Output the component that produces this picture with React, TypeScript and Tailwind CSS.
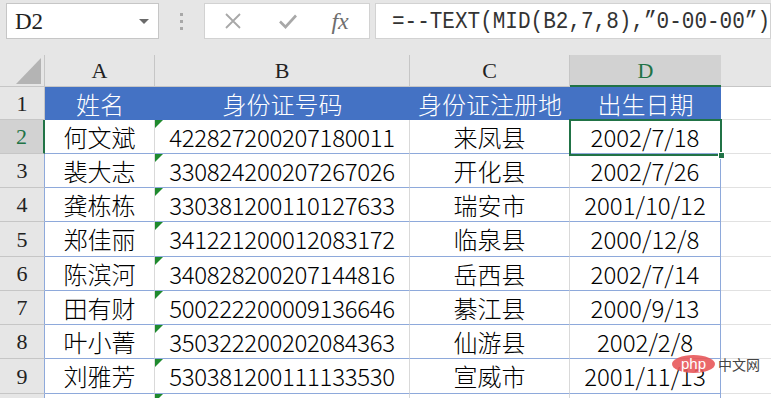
import React from "react";

const rows: [string, string, string, string][] = [
  ["何文斌", "422827200207180011", "来凤县", "2002/7/18"],
  ["裴大志", "330824200207267026", "开化县", "2002/7/26"],
  ["龚栋栋", "330381200110127633", "瑞安市", "2001/10/12"],
  ["郑佳丽", "341221200012083172", "临泉县", "2000/12/8"],
  ["陈滨河", "340828200207144816", "岳西县", "2002/7/14"],
  ["田有财", "500222200009136646", "綦江县", "2000/9/13"],
  ["叶小菁", "350322200202084363", "仙游县", "2002/2/8"],
  ["刘雅芳", "530381200111133530", "宣威市", "2001/11/13"],
];

const heights = ["h-[34px]", "h-[34px]", "h-[34px]", "h-[35px]", "h-[34px]", "h-[34px]", "h-[34px]", "h-[35px]"];

function Tri() {
  return (
    <div className="absolute left-0 top-0 w-0 h-0 border-t-[8px] border-t-[#1f8a2e] border-r-[8px] border-r-transparent" />
  );
}

export default function App() {
  return (
    <div className="relative w-[771px] h-[398px] overflow-hidden bg-[#e6e6e6]">
      {/* formula bar */}
      <div className="flex h-[55px] pt-[3px]">
        <div className="ml-[6px] w-[153px] h-[36px] bg-white border border-[#c6c6c6] flex items-center justify-between pl-[8px] pr-[9px]">
          <span className="font-['Liberation_Serif',serif] text-[23px] text-[#222] leading-none">D2</span>
          <div className="w-0 h-0 border-l-[5px] border-l-transparent border-r-[5px] border-r-transparent border-t-[5px] border-t-[#6a6a6a]" />
        </div>
        <div className="w-[46px] h-[36px] flex flex-col items-center justify-center gap-[4px]">
          <div className="w-[3px] h-[3px] bg-[#a8a8a8]" />
          <div className="w-[3px] h-[3px] bg-[#a8a8a8]" />
          <div className="w-[3px] h-[3px] bg-[#a8a8a8]" />
        </div>
        <div className="w-[166px] h-[36px] bg-white border border-[#d2d2d2] flex items-center">
          <svg className="ml-[19px]" width="18" height="18" viewBox="0 0 18 18">
            <path d="M2 2 L16 16 M16 2 L2 16" stroke="#a8a8a8" strokeWidth="1.8" fill="none" />
          </svg>
          <svg className="ml-[36px]" width="20" height="16" viewBox="0 0 20 16">
            <path d="M2 8.5 L7.5 14 L18 2.5" stroke="#a8a8a8" strokeWidth="2.6" fill="none" />
          </svg>
          <span className="ml-[33px] font-['Liberation_Serif',serif] italic text-[24px] text-[#6e6e6e] leading-none">fx</span>
        </div>
        <div className="ml-[5px] flex-1 h-[36px] bg-white border border-[#d2d2d2] flex items-center pl-[16px]">
          <span className="font-['Liberation_Mono',monospace] text-[21px] text-[#333] leading-none whitespace-nowrap scale-y-[1.15]">
            =--TEXT(MID(B2,7,8),”0-00-00”)
          </span>
        </div>
      </div>

      {/* column headers */}
      <div className="flex h-[32px] font-['Liberation_Serif',serif] text-[22px] text-[#222]">
        <div className="w-[45px] h-full border-r border-b border-[#c6c6c6] flex items-end justify-end pr-[3px] pb-[2px]">
          <div className="w-0 h-0 border-l-[25px] border-l-transparent border-b-[26px] border-b-[#b4b4b4]" />
        </div>
        <div className="w-[110px] h-full border-r border-b border-[#c6c6c6] flex items-center justify-center">A</div>
        <div className="w-[255px] h-full border-r border-b border-[#c6c6c6] flex items-center justify-center">B</div>
        <div className="w-[160px] h-full border-r border-b border-[#c6c6c6] flex items-center justify-center">C</div>
        <div className="w-[151px] h-full bg-[#d2d2d2] border-b-2 border-[#217346] flex items-center justify-center text-[#217346]">D</div>
        <div className="flex-1 h-full border-b border-[#c6c6c6]" />
      </div>

      {/* row 1 */}
      <div className="flex h-[33px]">
        <div className="w-[45px] h-full border-r border-b border-[#c6c6c6] flex items-center justify-center font-['Liberation_Serif',serif] text-[22px] text-[#222]">1</div>
        <div className="flex h-full bg-[#4472c4] text-white font-['Noto_Sans_CJK_SC',sans-serif] font-light text-[24px] leading-none">
          <div className="w-[110px] flex items-center justify-center">姓名</div>
          <div className="w-[255px] flex items-center justify-center">身份证号码</div>
          <div className="w-[160px] flex items-center justify-center">身份证注册地</div>
          <div className="w-[151px] flex items-center justify-center">出生日期</div>
        </div>
        <div className="flex-1 h-full bg-white border-b border-[#e1e1e1]" />
      </div>

      {rows.map((r, i) => {
        const sel = i === 0;
        return (
          <div key={i} className={`flex ${heights[i]}`}>
            <div
              className={
                sel
                  ? "w-[45px] h-full bg-[#d2d2d2] border-r-2 border-r-[#217346] border-b border-b-[#c6c6c6] flex items-center justify-center font-['Liberation_Serif',serif] text-[22px] text-[#217346]"
                  : "w-[45px] h-full border-r border-r-[#8ea9db] border-b border-b-[#c6c6c6] flex items-center justify-center font-['Liberation_Serif',serif] text-[22px] text-[#222]"
              }
            >
              {i + 2}
            </div>
            <div className="flex h-full bg-white text-black font-['Noto_Sans_CJK_SC',sans-serif] font-light text-[24px] leading-none">
              <div className="w-[110px] h-full border-r border-r-[#d9d9d9] border-b border-b-[#8ea9db] flex items-center justify-center">{r[0]}</div>
              <div className="relative w-[255px] h-full border-r border-r-[#d9d9d9] border-b border-b-[#8ea9db] flex items-center justify-center tracking-[-0.3px]">
                <Tri />
                {r[1]}
              </div>
              <div className="w-[160px] h-full border-r border-r-[#d9d9d9] border-b border-b-[#8ea9db] flex items-center justify-center">{r[2]}</div>
              <div className="w-[151px] h-full border-r border-r-[#8ea9db] border-b border-b-[#8ea9db] flex items-center justify-center">{r[3]}</div>
            </div>
            <div className="flex-1 h-full bg-white border-b border-[#e1e1e1]" />
          </div>
        );
      })}

      {/* row 10 partial */}
      <div className="flex h-[20px]">
        <div className="w-[45px] h-full border-r border-r-[#8ea9db]" />
        <div className="w-[110px] h-full bg-white border-r border-r-[#d9d9d9]" />
        <div className="relative w-[255px] h-full bg-white border-r border-r-[#d9d9d9]">
          <Tri />
        </div>
        <div className="w-[160px] h-full bg-white border-r border-r-[#d9d9d9]" />
        <div className="w-[151px] h-full bg-white border-r border-r-[#8ea9db]" />
        <div className="flex-1 h-full bg-white" />
      </div>

      {/* selection */}
      <div className="absolute left-[569px] top-[119px] w-[153px] h-[37px] border-2 border-[#217346]" />
      <div className="absolute left-[718px] top-[152px] w-[7px] h-[7px] bg-[#217346] border border-white" />

      {/* watermark */}
      <div className="absolute left-[672px] top-[355px] flex items-center">
        <div className="w-[43px] h-[18px] rounded-[50%] bg-[#e8585a]/90 flex items-center justify-center">
          <span className="font-['Liberation_Sans',sans-serif] text-[15px] text-white leading-none -mt-[2px]">php</span>
        </div>
        <span className="ml-[3px] font-['Noto_Sans_CJK_SC',sans-serif] text-[14px] text-[#444] leading-none">中文网</span>
      </div>
    </div>
  );
}
